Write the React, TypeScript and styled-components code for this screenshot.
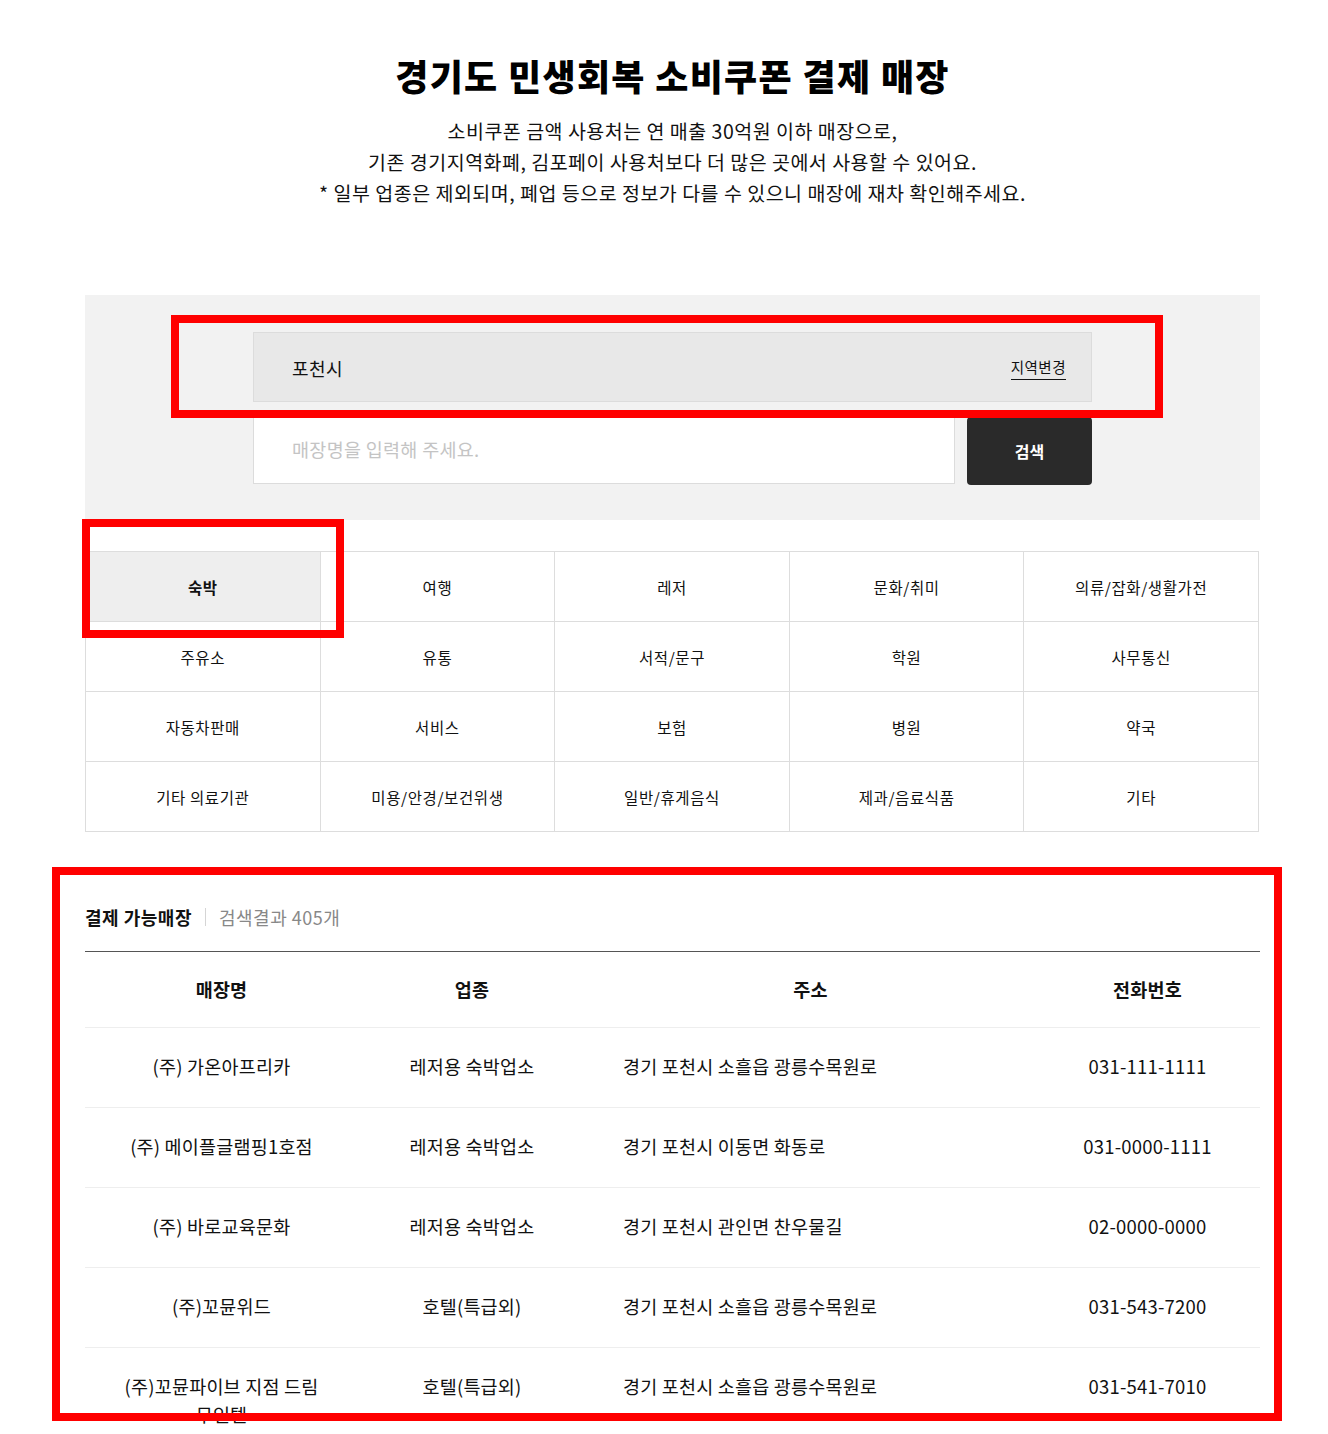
import styled, { createGlobalStyle } from 'styled-components';

const GlobalStyle = createGlobalStyle`
  * { box-sizing: border-box; }
  body {
    margin: 0;
    background: #fff;
    color: #111;
    font-family: "Noto Sans CJK KR", "Noto Sans", sans-serif;
  }
`;

const Page = styled.div`
  position: relative;
  width: 1328px;
  min-height: 1434px;
  padding: 53px 0 80px 85px;
`;

const Content = styled.div`
  width: 1175px;
`;

const Title = styled.h1`
  margin: 0;
  text-align: center;
  font-size: 36px;
  line-height: 44px;
  font-weight: 900;
  letter-spacing: 1.3px;
  color: #000;
`;

const Intro = styled.p`
  margin: 18px 0 0;
  text-align: center;
  font-size: 19.5px;
  line-height: 31px;
  color: #111;
  letter-spacing: 0.5px;
`;

const SearchPanel = styled.div`
  margin-top: 87px;
  background: #f2f2f2;
  padding: 37px 0 35px;
`;

const SearchInner = styled.div`
  width: 839px;
  margin: 0 auto;
  display: flex;
  flex-direction: column;
  gap: 15px;
`;

const RegionBox = styled.div`
  height: 70px;
  background: #e8e8e8;
  border: 1px solid #dcdcdc;
  display: flex;
  align-items: center;
  justify-content: space-between;
  padding: 2px 25px 0 38px;
`;

const RegionName = styled.span`
  font-size: 18px;
  letter-spacing: 0.5px;
  color: #111;
`;

const RegionChange = styled.span`
  font-size: 14.5px;
  letter-spacing: 0.5px;
  line-height: 20px;
  color: #111;
  border-bottom: 1px solid #111;
  padding-bottom: 2px;
`;

const SearchRow = styled.div`
  display: flex;
  gap: 12px;
`;

const SearchInput = styled.input`
  flex: 1;
  height: 67px;
  border: 1px solid #dcdcdc;
  background: #fff;
  padding: 0 38px 3px;
  font-family: inherit;
  font-size: 18.5px;
  letter-spacing: 0.3px;
  color: #111;
  outline: none;
  &::placeholder { color: #c4c4c4; }
`;

const SearchButton = styled.button`
  width: 125px;
  height: 68px;
  border: 0;
  border-radius: 4px;
  background: #2a2a2a;
  color: #fff;
  font-family: inherit;
  font-size: 16px;
  font-weight: 700;
`;

const CategoryGrid = styled.div`
  margin-top: 31px;
  width: 1174px;
  display: grid;
  grid-template-columns: repeat(5, 1fr);
  border-top: 1px solid #dddddd;
  border-left: 1px solid #dddddd;
`;

const CategoryCell = styled.div<{ $active?: boolean }>`
  height: 70px;
  display: flex;
  align-items: center;
  justify-content: center;
  border-right: 1px solid #dddddd;
  border-bottom: 1px solid #dddddd;
  background: ${p => (p.$active ? '#eeeeee' : '#fff')};
  font-size: 15.5px;
  letter-spacing: 0.6px;
  font-weight: ${p => (p.$active ? 700 : 400)};
  color: #111;
`;

const ResultHead = styled.div`
  margin-top: 72px;
  display: flex;
  align-items: center;
  padding-bottom: 21px;
  border-bottom: 1px solid #555;
  line-height: 26px;
`;

const ResultTitle = styled.strong`
  font-size: 18px;
  letter-spacing: 0.5px;
  font-weight: 700;
  color: #111;
`;

const Divider = styled.span`
  width: 1px;
  height: 18px;
  background: #d5d5d5;
  margin: 0 13px;
`;

const ResultCount = styled.span`
  font-size: 18px;
  letter-spacing: 0.5px;
  color: #888;
`;

const Table = styled.table`
  width: 100%;
  border-collapse: collapse;
  table-layout: fixed;
`;

const Th = styled.th<{ $w: number }>`
  width: ${p => p.$w}px;
  padding: 23px 30px 24px;
  font-size: 18.5px;
  letter-spacing: 0.2px;
  line-height: 28px;
  font-weight: 700;
  text-align: center;
  border-bottom: 1px solid #eeeeee;
`;

const Td = styled.td<{ $left?: boolean }>`
  padding: ${p => (p.$left ? '24px 10px 27px 37px' : '24px 30px 27px')};
  font-size: 18.5px;
  letter-spacing: 0.2px;
  line-height: 28px;
  vertical-align: top;
  word-break: keep-all;
  text-align: ${p => (p.$left ? 'left' : 'center')};
  border-bottom: 1px solid #eeeeee;
  color: #111;
`;

const Highlight = styled.div<{ $x: number; $y: number; $w: number; $h: number }>`
  position: absolute;
  left: ${p => p.$x}px;
  top: ${p => p.$y}px;
  width: ${p => p.$w}px;
  height: ${p => p.$h}px;
  border: 8px solid #ff0000;
  pointer-events: none;
`;

const categories = [
  '숙박', '여행', '레저', '문화/취미', '의류/잡화/생활가전',
  '주유소', '유통', '서적/문구', '학원', '사무통신',
  '자동차판매', '서비스', '보험', '병원', '약국',
  '기타 의료기관', '미용/안경/보건위생', '일반/휴게음식', '제과/음료식품', '기타',
];

const stores = [
  { name: '(주) 가온아프리카', type: '레저용 숙박업소', addr: '경기 포천시 소흘읍 광릉수목원로', tel: '031-111-1111' },
  { name: '(주) 메이플글램핑1호점', type: '레저용 숙박업소', addr: '경기 포천시 이동면 화동로', tel: '031-0000-1111' },
  { name: '(주) 바로교육문화', type: '레저용 숙박업소', addr: '경기 포천시 관인면 찬우물길', tel: '02-0000-0000' },
  { name: '(주)꼬뮨위드', type: '호텔(특급외)', addr: '경기 포천시 소흘읍 광릉수목원로', tel: '031-543-7200' },
  { name: '(주)꼬뮨파이브 지점 드림 무인텔', type: '호텔(특급외)', addr: '경기 포천시 소흘읍 광릉수목원로', tel: '031-541-7010' },
];

export default function App() {
  return (
    <Page>
      <GlobalStyle />
      <Content>
        <Title>경기도 민생회복 소비쿠폰 결제 매장</Title>
        <Intro>
          소비쿠폰 금액 사용처는 연 매출 30억원 이하 매장으로,<br />
          기존 경기지역화폐, 김포페이 사용처보다 더 많은 곳에서 사용할 수 있어요.<br />
          * 일부 업종은 제외되며, 폐업 등으로 정보가 다를 수 있으니 매장에 재차 확인해주세요.
        </Intro>

        <SearchPanel>
          <SearchInner>
            <RegionBox>
              <RegionName>포천시</RegionName>
              <RegionChange>지역변경</RegionChange>
            </RegionBox>
            <SearchRow>
              <SearchInput placeholder="매장명을 입력해 주세요." />
              <SearchButton>검색</SearchButton>
            </SearchRow>
          </SearchInner>
        </SearchPanel>

        <CategoryGrid>
          {categories.map((c, i) => (
            <CategoryCell key={c} $active={i === 0}>{c}</CategoryCell>
          ))}
        </CategoryGrid>

        <ResultHead>
          <ResultTitle>결제 가능매장</ResultTitle>
          <Divider />
          <ResultCount>검색결과 405개</ResultCount>
        </ResultHead>

        <Table>
          <thead>
            <tr>
              <Th $w={273}>매장명</Th>
              <Th $w={228}>업종</Th>
              <Th $w={449}>주소</Th>
              <Th $w={225}>전화번호</Th>
            </tr>
          </thead>
          <tbody>
            {stores.map(s => (
              <tr key={s.name}>
                <Td>{s.name}</Td>
                <Td>{s.type}</Td>
                <Td $left>{s.addr}</Td>
                <Td>{s.tel}</Td>
              </tr>
            ))}
          </tbody>
        </Table>
      </Content>

      <Highlight $x={171} $y={315} $w={992} $h={103} />
      <Highlight $x={82} $y={519} $w={262} $h={119} />
      <Highlight $x={52} $y={867} $w={1230} $h={554} />
    </Page>
  );
}
